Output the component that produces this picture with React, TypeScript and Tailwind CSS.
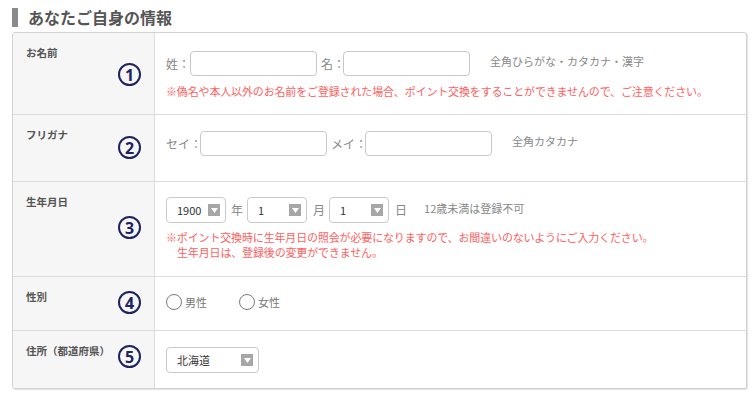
import React from "react";

const FONT = { fontFamily: '"Noto Sans CJK JP", "Noto Sans", sans-serif' };

function Circle({ n, mt }: { n: string; mt: string }) {
  return (
    <div
      className={`w-[23px] h-[23px] rounded-full border-[2.5px] border-[#1d2361] flex items-center justify-center text-[#1d2361] text-[16px] font-bold leading-none shrink-0 ${mt}`}
      style={{ fontFamily: '"Noto Sans", "Liberation Sans", sans-serif' }}
    >
      {n}
    </div>
  );
}

function Arrow() {
  return (
    <div className="w-[12px] h-[12px] bg-[#a6a6a6] flex items-center justify-center shrink-0">
      <svg width="7" height="5" viewBox="0 0 7 5">
        <path d="M0 0 L7 0 L3.5 5 Z" fill="#fff" />
      </svg>
    </div>
  );
}

function Select({ value, w, pad }: { value: string; w: string; pad: string }) {
  return (
    <div
      className={`${w} h-[26px] border-[1.5px] border-[#cacaca] rounded-[4px] bg-white flex items-center justify-between pl-[10px] ${pad} text-[11px] text-[#333]`}
    >
      <span>{value}</span>
      <Arrow />
    </div>
  );
}

function Input() {
  return <div className="w-[127px] h-[25px] border-[1.5px] border-[#c8c8c8] rounded-[4px] bg-white" />;
}

function Label({ text, n, mt }: { text: string; n: string; mt: string }) {
  return (
    <div className="w-[142px] shrink-0 bg-[#f6f6f6] border-r border-[#dcdcdc] flex items-start justify-between pl-[13px] pr-[13px] pt-[12px]">
      <span className="text-[10.5px] font-bold text-[#555] leading-[16px]">{text}</span>
      <Circle n={n} mt={mt} />
    </div>
  );
}

function Radio({ label }: { label: string }) {
  return (
    <div className="flex items-center">
      <div className="w-[16px] h-[16px] rounded-full border border-[#7a7a7a] bg-white" />
      <span className="ml-[3px] text-[11px] text-[#777] leading-[16px]">{label}</span>
    </div>
  );
}

export default function App() {
  return (
    <div className="w-[755px] h-[397px] bg-white pl-[12px] pt-[8px]" style={FONT}>
      <div className="flex items-center h-[19px]">
        <div className="w-[6px] h-[19px] bg-[#8a8a8a]" />
        <h2 className="ml-[10px] text-[16px] font-bold text-[#555] leading-[19px]">あなたご自身の情報</h2>
      </div>

      <div className="mt-[5px] w-[735px] border border-[#d2d2d2] rounded-[3px] shadow-[1px_1px_1px_rgba(0,0,0,0.12)] bg-white overflow-hidden">
        {/* Row 1 */}
        <div className="flex h-[81px]">
          <Label text="お名前" n="1" mt="mt-[18px]" />
          <div className="flex-1 pl-[11px] pt-[18px]">
            <div className="flex items-start">
              <div className="flex items-center text-[12px] text-[#888]">
                <span>姓：</span>
                <Input />
                <span className="ml-[4px] -mr-[2px]">名：</span>
                <Input />
              </div>
              <span className="ml-[20px] mt-[2px] text-[11px] text-[#888] leading-[16px]">全角ひらがな・カタカナ・漢字</span>
            </div>
            <p className="mt-[8px] text-[11px] leading-[14px] text-[#ff6060] tracking-[-0.15px]">
              ※偽名や本人以外のお名前をご登録された場合、ポイント交換をすることができませんので、ご注意ください。
            </p>
          </div>
        </div>

        {/* Row 2 */}
        <div className="flex h-[67px] border-t border-[#dcdcdc]">
          <Label text="フリガナ" n="2" mt="mt-[9px]" />
          <div className="flex-1 pl-[11px] pt-[16px]">
            <div className="flex items-start">
              <div className="flex items-center text-[12px] text-[#888]">
                <span className="-mr-[2px]">セイ：</span>
                <Input />
                <span className="ml-[4px] -mr-[2px]">メイ：</span>
                <Input />
              </div>
              <span className="ml-[20px] mt-[2px] text-[11px] text-[#888] leading-[16px]">全角カタカナ</span>
            </div>
          </div>
        </div>

        {/* Row 3 */}
        <div className="flex h-[95px] border-t border-[#dcdcdc]">
          <Label text="生年月日" n="3" mt="mt-[22px]" />
          <div className="flex-1 pl-[11px] pt-[15px]">
            <div className="flex items-center text-[12px] text-[#888]">
              <Select value="1900" w="w-[60px]" pad="pr-[5px]" />
              <span className="ml-[5px] mr-[4px]">年</span>
              <Select value="1" w="w-[60px]" pad="pr-[5px]" />
              <span className="ml-[6px] mr-[4px]">月</span>
              <Select value="1" w="w-[60px]" pad="pr-[5px]" />
              <span className="ml-[6px]">日</span>
              <span className="ml-[17px] mb-[5px] text-[11px] text-[#888] leading-[16px]">12歳未満は登録不可</span>
            </div>
            <div className="mt-[7px] text-[11px] leading-[15px] text-[#ff6060] tracking-[-0.15px]">
              <p>※ポイント交換時に生年月日の照会が必要になりますので、お間違いのないようにご入力ください。</p>
              <p className="pl-[11px]">生年月日は、登録後の変更ができません。</p>
            </div>
          </div>
        </div>

        {/* Row 4 */}
        <div className="flex h-[54px] border-t border-[#dcdcdc]">
          <Label text="性別" n="4" mt="mt-[2px]" />
          <div className="flex-1 pl-[11px] pt-[17px]">
            <div className="flex items-center">
              <Radio label="男性" />
              <div className="ml-[32px]">
                <Radio label="女性" />
              </div>
            </div>
          </div>
        </div>

        {/* Row 5 */}
        <div className="flex h-[58px] border-t border-[#dcdcdc]">
          <Label text="住所（都道府県）" n="5" mt="mt-[2px]" />
          <div className="flex-1 pl-[11px] pt-[16px]">
            <Select value="北海道" w="w-[93px]" pad="pr-[5px]" />
          </div>
        </div>
      </div>
    </div>
  );
}
